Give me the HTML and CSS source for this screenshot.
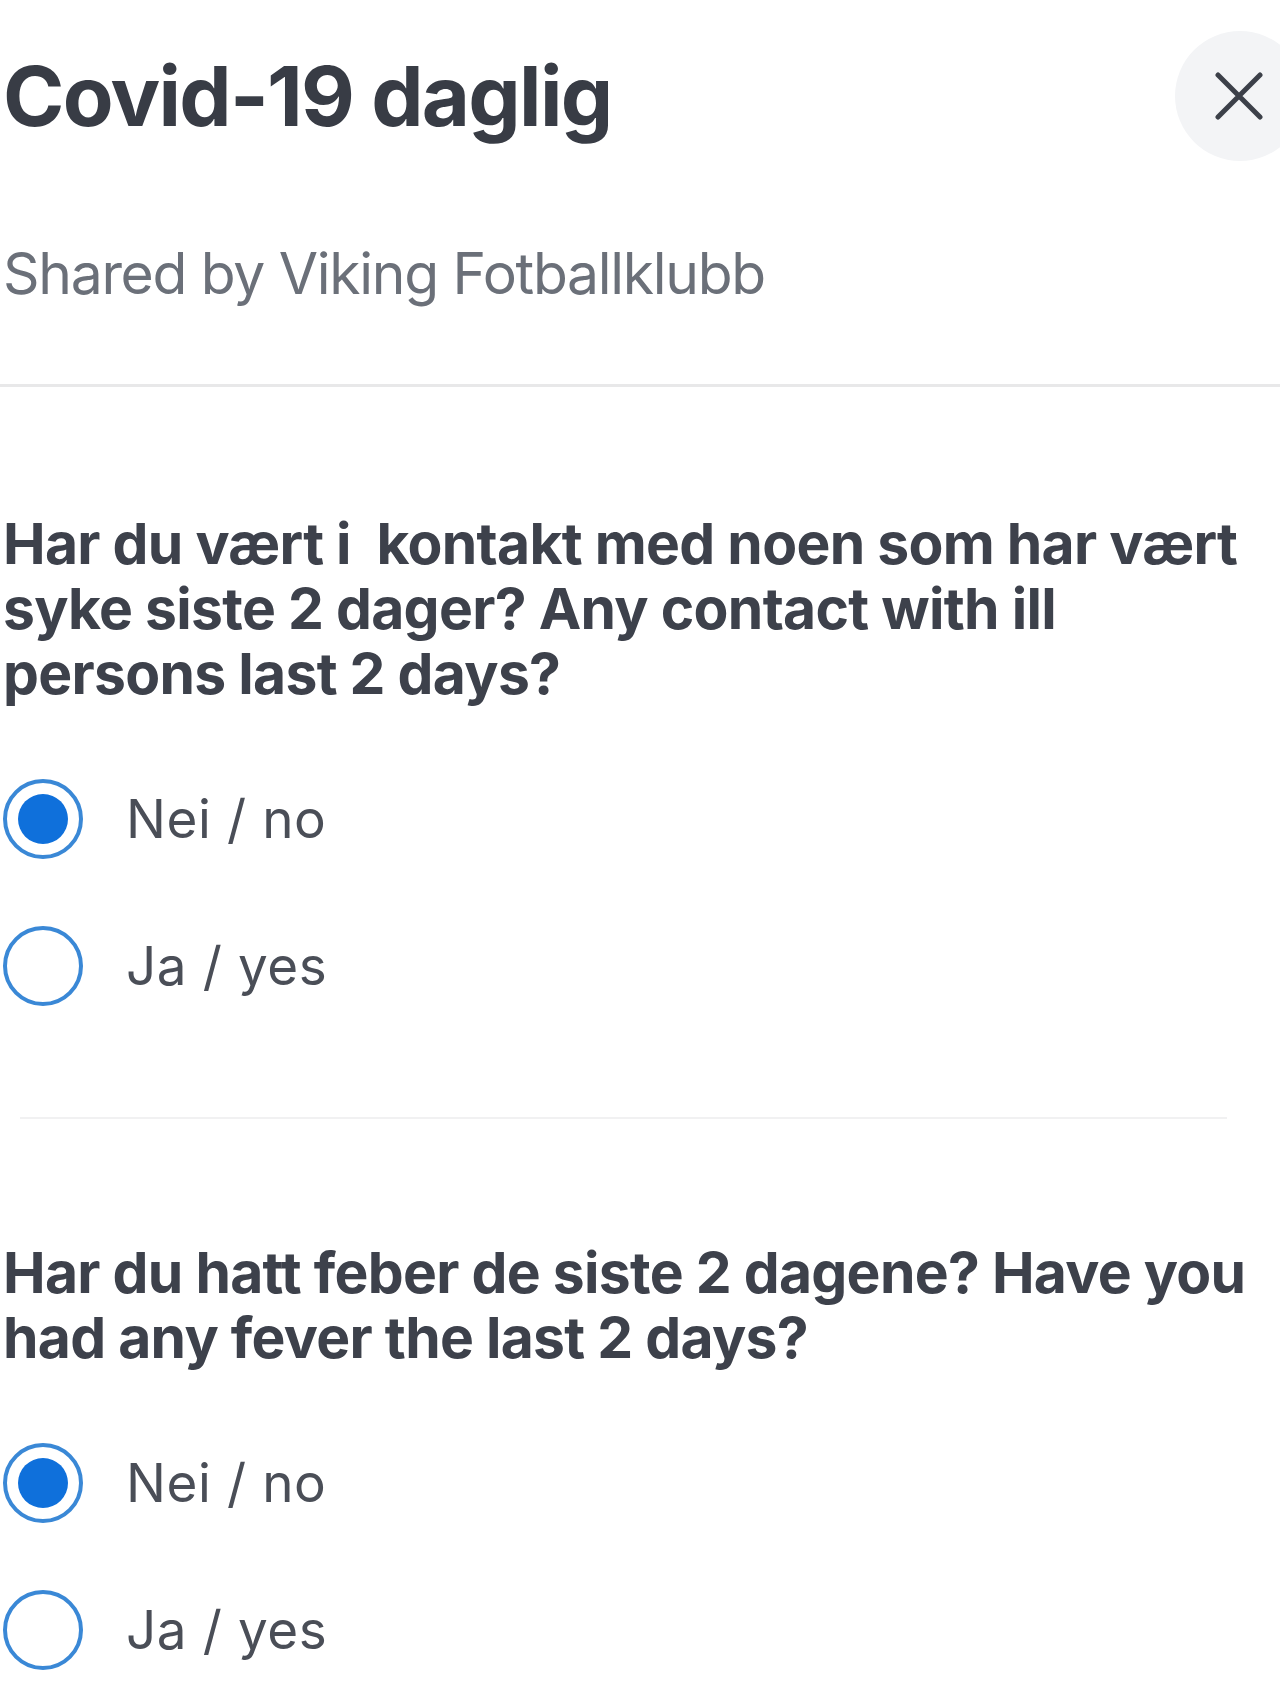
FILE: index.html
```html
<!DOCTYPE html>
<html lang="no">
<head>
<meta charset="utf-8">
<title>Covid-19 daglig</title>
<link rel="stylesheet" href="styles.css">
</head>
<body>
<div class="sheet">
  <header class="header">
    <h1 class="title">Covid-19 daglig</h1>
    <button class="close" aria-label="Lukk">
      <svg viewBox="0 0 48 48" width="48" height="48"><path d="M3 3 L45 45 M45 3 L3 45" stroke="#3c4049" stroke-width="5" stroke-linecap="round" fill="none"/></svg>
    </button>
  </header>
  <p class="subtitle">Shared by Viking Fotballklubb</p>
  <hr class="rule">

  <section class="question q1">
    <h2 class="qtext">Har du vært i&nbsp; kontakt med noen som har vært syke siste 2 dager? Any contact with ill persons last 2 days?</h2>
    <div class="options">
      <label class="option"><span class="radio checked"></span><span class="label">Nei / no</span></label>
      <label class="option"><span class="radio"></span><span class="label">Ja / yes</span></label>
    </div>
  </section>

  <hr class="rule-light">

  <section class="question q2">
    <h2 class="qtext">Har du hatt feber de siste 2 dagene? Have you had any fever the last 2 days?</h2>
    <div class="options">
      <label class="option"><span class="radio checked"></span><span class="label">Nei / no</span></label>
      <label class="option"><span class="radio"></span><span class="label">Ja / yes</span></label>
    </div>
  </section>
</div>
</body>
</html>
```
FILE: styles.css
```css
html, body {
  margin: 0;
  padding: 0;
  background: #ffffff;
  overflow: hidden;
}
body {
  font-family: Inter, "Noto Sans", "Liberation Sans", sans-serif;
  width: 1280px;
  height: 1707px;
}
.sheet {
  padding-left: 3px;
}
.header {
  display: flex;
  justify-content: space-between;
  align-items: center;
  padding-top: 31px;
  margin-right: -25px;
}
.title {
  margin: 0;
  font-size: 83px;
  line-height: 100px;
  font-weight: 700;
  color: #383c45;
  letter-spacing: -1.7px;
}
.close {
  width: 130px;
  height: 130px;
  border: none;
  border-radius: 50%;
  background: #f3f4f6;
  display: flex;
  align-items: center;
  justify-content: center;
  padding: 0;
  padding-right: 2px;
}
.subtitle {
  margin: 77px 0 0;
  font-size: 57px;
  line-height: 72px;
  color: #6b7079;
  letter-spacing: -1.3px;
}
.rule {
  margin: 74px 0 0 -3px;
  border: none;
  height: 3px;
  background: #e8e8e9;
}
.question {
  margin-top: 124px;
}
.q2 {
  margin-top: 121px;
}
.qtext {
  margin: 0;
  font-size: 57px;
  line-height: 65px;
  font-weight: 700;
  color: #3d414b;
  letter-spacing: -0.7px;
  max-width: 1248px;
}
.options {
  margin-top: 63px;
  display: flex;
  flex-direction: column;
  gap: 47px;
}
.option {
  display: flex;
  align-items: center;
  height: 100px;
}
.radio {
  box-sizing: border-box;
  width: 80px;
  height: 80px;
  border-radius: 50%;
  border: 4px solid #3a88d6;
  display: flex;
  align-items: center;
  justify-content: center;
  flex: none;
}
.radio.checked::after {
  content: "";
  width: 50px;
  height: 50px;
  border-radius: 50%;
  background: #0f70db;
}
.label {
  margin-left: 43px;
  font-size: 53px;
  letter-spacing: 0.6px;
  color: #4a4e57;
}
.rule-light {
  margin: 101px 53px 0 17px;
  border: none;
  height: 2px;
  background: #f1f1f2;
}
```
